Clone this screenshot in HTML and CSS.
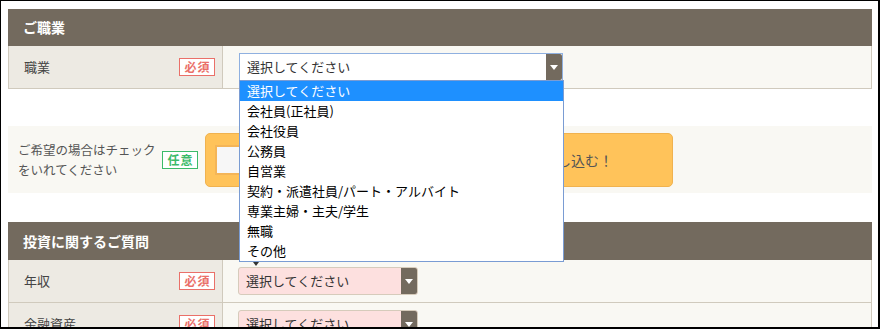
FILE: index.html
```html
<!DOCTYPE html>
<html lang="ja">
<head>
<meta charset="utf-8">
<link rel="stylesheet" href="styles.css">
</head>
<body>
<div class="frame">
  <section class="sec">
    <h2 class="sec-title">ご職業</h2>
    <div class="row">
      <div class="lbl"><span>職業</span><span class="badge req">必須</span></div>
      <div class="val">
        <div class="sel sel-open">
          <span class="sel-text">選択してください</span><span class="sel-arrow"></span>
          <ul class="list">
            <li class="on">選択してください</li>
            <li>会社員(正社員)</li>
            <li>会社役員</li>
            <li>公務員</li>
            <li>自営業</li>
            <li>契約・派遣社員/パート・アルバイト</li>
            <li>専業主婦・主夫/学生</li>
            <li>無職</li>
            <li>その他</li>
          </ul>
        </div>
      </div>
    </div>
  </section>

  <div class="opt-row">
    <p class="opt-lbl">ご希望の場合はチェック<br>をいれてください</p>
    <span class="badge any">任意</span>
    <label class="apply">
      <span class="apply-box"></span>
      <span class="apply-text">資料請求を申し込む！</span>
    </label>
  </div>

  <section class="sec sec-invest">
    <h2 class="sec-title">投資に関するご質問</h2>
    <div class="row">
      <div class="lbl"><span>年収</span><span class="badge req">必須</span></div>
      <div class="val">
        <div class="sel sel-pink">
          <span class="tip-arrow"></span>
          <span class="sel-text">選択してください</span><span class="sel-arrow"></span>
        </div>
      </div>
    </div>
    <div class="row">
      <div class="lbl"><span>金融資産</span><span class="badge req">必須</span></div>
      <div class="val">
        <div class="sel sel-pink">
          <span class="sel-text">選択してください</span><span class="sel-arrow"></span>
        </div>
      </div>
    </div>
  </section>
</div>
</body>
</html>
```

FILE: styles.css
```css
* { box-sizing: border-box; }
html, body { margin: 0; padding: 0; background: #fff; }
body {
  font-family: "Noto Sans CJK JP", "Noto Sans", sans-serif;
  color: #333;
}
.frame {
  width: 880px;
  height: 329px;
  overflow: hidden;
  border-style: solid;
  border-color: #000;
  border-width: 1px 2px 2px 1px;
  padding: 8px 6px 0 7px;
}
.sec-title {
  margin: 0;
  height: 37px;
  background: #736a5e;
  color: #fff;
  font-size: 14px;
  font-weight: bold;
  line-height: 37px;
  padding-left: 15px;
}
.row {
  display: flex;
  height: 43px;
  border: 1px solid #d0cabd;
  border-top: none;
}
.lbl {
  width: 214px;
  background: #edeae3;
  border-right: 1px solid #d0cabd;
  display: flex;
  align-items: center;
  justify-content: space-between;
  padding: 0 7px 0 15px;
  font-size: 13px;
  line-height: 20px;
  color: #444;
}
.val {
  flex: 1;
  background: #f9f8f3;
  padding: 7px 0 0 15px;
}
.badge {
  width: 36px;
  height: 18px;
  border: 1px solid;
  background: #fff;
  font-size: 12px;
  font-weight: bold;
  line-height: 16px;
  text-align: center;
  letter-spacing: 1px;
  padding-left: 1px;
}
.req { color: #ea7069; border-color: #ea7069; }
.any { color: #3cbb69; border-color: #3cbb69; }

.sel {
  position: relative;
  display: flex;
  height: 28px;
  border: 1px solid #d6cbbb;
  border-radius: 3px;
  font-size: 13px;
  line-height: 26px;
  color: #333;
}
.sel-text { flex: 1; padding-left: 7px; }
.sel-arrow {
  width: 16px;
  background: #736a5e;
  border-radius: 0 2px 2px 0;
  position: relative;
}
.sel-arrow::after {
  content: "";
  position: absolute;
  left: 4px;
  top: 11px;
  border-left: 4px solid transparent;
  border-right: 4px solid transparent;
  border-top: 5px solid #fff;
}
.sel-open {
  width: 324px;
  margin-left: 1px;
  background: #fff;
  border-color: #8fb0e0;
  border-radius: 0;
}
.sel-pink {
  width: 180px;
  background: #fde0df;
}
.list {
  position: absolute;
  z-index: 10;
  left: -1px;
  top: 26px;
  width: 325px;
  margin: 0;
  padding: 0;
  list-style: none;
  background: #fff;
  border: 1px solid #7a9cd3;
}
.list li {
  height: 20px;
  line-height: 20px;
  padding-left: 7px;
  color: #000;
  font-size: 13px;
}
.list li.on { background: #1e90ff; color: #fff; }

.tip-arrow {
  position: absolute;
  left: 14px;
  top: -6px;
  border-left: 3px solid transparent;
  border-right: 3px solid transparent;
  border-top: 4px solid #333;
}

.opt-row {
  margin-top: 37px;
  height: 67px;
  background: #f9f8f3;
  display: flex;
  align-items: center;
  padding-left: 10px;
}
.opt-lbl {
  margin: 0;
  width: 144px;
  font-size: 12.5px;
  line-height: 20px;
  color: #555;
}
.apply {
  margin-left: 7px;
  width: 468px;
  height: 54px;
  background: #ffc35a;
  border: 1px solid #f0b24f;
  border-radius: 5px;
  display: flex;
  align-items: center;
  padding-left: 9px;
}
.apply-box {
  width: 30px;
  height: 30px;
  background: #f7f7f7;
  border: 2px solid #f4b558;
}
.apply-text {
  flex: 1;
  text-align: right;
  padding-right: 59px;
  font-size: 14px;
  color: #555;
}
.sec-invest { margin-top: 29px; }
.sec-invest .sec-title { height: 38px; line-height: 38px; }
.sec-invest .val { padding-left: 15px; }
```
